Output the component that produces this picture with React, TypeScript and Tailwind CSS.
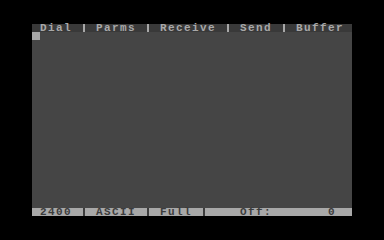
import React from "react";

const Sep = ({ light }: { light?: boolean }) => (
  <span className="inline-flex h-[8px] w-[8px] justify-start">
    <span className={`ml-[3px] h-[8px] w-[2px] ${light ? "bg-[#a8a8a8]" : "bg-[#3c3c3c]"}`} />
  </span>
);

const Seg = ({ children }: { children: string }) => (
  <span className="whitespace-pre">{children}</span>
);

export default function App() {
  const font = { fontFamily: '"Liberation Mono", "DejaVu Sans Mono", monospace' };
  return (
    <div className="flex h-[240px] w-[384px] items-center justify-center bg-black">
      <div className="flex h-[192px] w-[320px] flex-col bg-[#454545]" style={font}>
        <div className="flex h-[8px] items-center bg-[#393939] text-[11px] font-bold leading-[8px] tracking-[1.4px] text-[#a8a8a8]">
          <Seg> Dial </Seg>
          <Sep light />
          <Seg> Parms </Seg>
          <Sep light />
          <Seg> Receive </Seg>
          <Sep light />
          <Seg> Send </Seg>
          <Sep light />
          <Seg> Buffer </Seg>
        </div>
        <div className="flex-1">
          <div className="h-[8px] w-[8px] bg-[#a8a8a8]" />
        </div>
        <div className="flex h-[8px] items-center bg-[#a8a8a8] text-[11px] font-bold leading-[8px] tracking-[1.4px] text-[#3c3c3c]">
          <Seg> 2400 </Seg>
          <Sep />
          <Seg> ASCII </Seg>
          <Sep />
          <Seg> Full </Seg>
          <Sep />
          <Seg>    Off:       0  </Seg>
        </div>
      </div>
    </div>
  );
}
